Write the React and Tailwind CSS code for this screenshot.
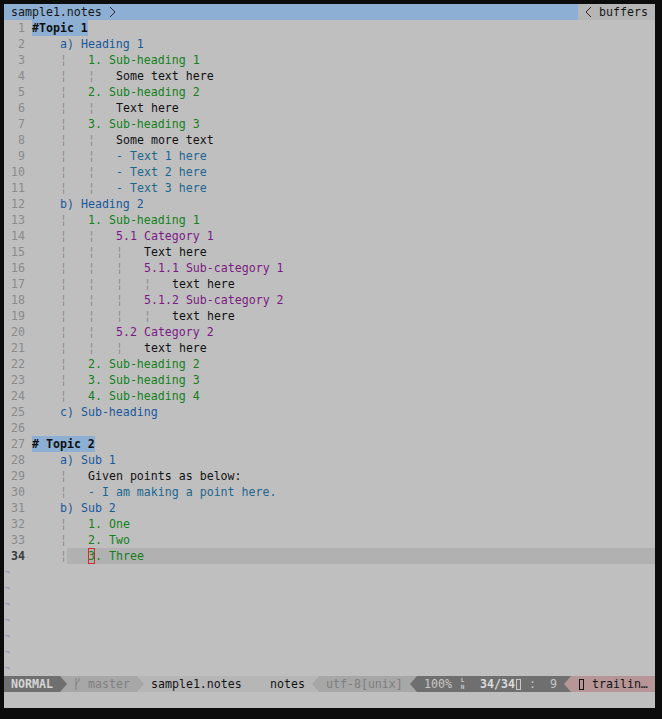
import React from "react";

const C = {
  head: "text-[#1a589c]",
  green: "text-[#13801a]",
  purple: "text-[#7a1a82]",
  dash: "text-[#1c668e]",
  plain: "text-[#111111]",
};

const lines = [
  { col: 0, g: [], t: "#Topic 1", top: true },
  { col: 4, g: [], t: "a) Heading 1", c: C.head },
  { col: 8, g: [4], t: "1. Sub-heading 1", c: C.green },
  { col: 12, g: [4, 8], t: "Some text here", c: C.plain },
  { col: 8, g: [4], t: "2. Sub-heading 2", c: C.green },
  { col: 12, g: [4, 8], t: "Text here", c: C.plain },
  { col: 8, g: [4], t: "3. Sub-heading 3", c: C.green },
  { col: 12, g: [4, 8], t: "Some more text", c: C.plain },
  { col: 12, g: [4, 8], t: "- Text 1 here", c: C.dash },
  { col: 12, g: [4, 8], t: "- Text 2 here", c: C.dash },
  { col: 12, g: [4, 8], t: "- Text 3 here", c: C.dash },
  { col: 4, g: [], t: "b) Heading 2", c: C.head },
  { col: 8, g: [4], t: "1. Sub-heading 1", c: C.green },
  { col: 12, g: [4, 8], t: "5.1 Category 1", c: C.purple },
  { col: 16, g: [4, 8, 12], t: "Text here", c: C.plain },
  { col: 16, g: [4, 8, 12], t: "5.1.1 Sub-category 1", c: C.purple },
  { col: 20, g: [4, 8, 12, 16], t: "text here", c: C.plain },
  { col: 16, g: [4, 8, 12], t: "5.1.2 Sub-category 2", c: C.purple },
  { col: 20, g: [4, 8, 12, 16], t: "text here", c: C.plain },
  { col: 12, g: [4, 8], t: "5.2 Category 2", c: C.purple },
  { col: 16, g: [4, 8, 12], t: "text here", c: C.plain },
  { col: 8, g: [4], t: "2. Sub-heading 2", c: C.green },
  { col: 8, g: [4], t: "3. Sub-heading 3", c: C.green },
  { col: 8, g: [4], t: "4. Sub-heading 4", c: C.green },
  { col: 4, g: [], t: "c) Sub-heading", c: C.head },
  { col: 0, g: [], t: "" },
  { col: 0, g: [], t: "# Topic 2", top: true },
  { col: 4, g: [], t: "a) Sub 1", c: C.head },
  { col: 8, g: [4], t: "Given points as below:", c: C.plain },
  { col: 8, g: [4], t: "- I am making a point here.", c: C.dash },
  { col: 4, g: [], t: "b) Sub 2", c: C.head },
  { col: 8, g: [4], t: "1. One", c: C.green },
  { col: 8, g: [4], t: "2. Two", c: C.green },
  { col: 8, g: [4], t: "3. Three", c: C.green, cursor: true },
];

function Row({ n, l }) {
  const cells = [];
  for (let i = 0; i < l.col; i++) {
    const isGuide = l.g.includes(i);
    cells.push(
      <span
        key={i}
        className={
          "inline-block w-[7px] shrink-0 text-center text-[#8d8d8d] " +
          (l.cursor && i >= 5 ? "bg-[#b1b1b1]" : "")
        }
      >
        {isGuide ? "\u00a6" : "\u00a0"}
      </span>
    );
  }
  return (
    <div className="flex h-[16px] w-[651px]">
      <div
        className={
          "w-[21px] shrink-0 text-right " +
          (l.cursor ? "font-bold text-[#3c3c3c]" : "text-[#8a8a8a]")
        }
      >
        {n}
      </div>
      <div className="w-[7px] shrink-0" />
      <div className="flex flex-1">
        {cells}
        {l.top ? (
          <span className="bg-[#8cafd3] font-bold text-[#0e0e0e]">{l.t}</span>
        ) : l.cursor ? (
          <div className="flex flex-1 bg-[#b1b1b1]">
            <span className="box-border inline-block h-[16px] w-[7px] border border-[#d22e2e] leading-[14px] text-[#13801a]">
              <span className="-ml-px">3</span>
            </span>
            <span className={l.c}>. Three</span>
          </div>
        ) : (
          <span className={l.c}>{l.t}</span>
        )}
      </div>
    </div>
  );
}

function Tri({ dir, bg, fill }) {
  return (
    <div className={"h-[16px] w-[7px] shrink-0 " + bg}>
      <svg width="7" height="16" viewBox="0 0 7 16" className="block">
        {dir === "r" ? (
          <polygon points="0,0 7,8 0,16" fill={fill} />
        ) : (
          <polygon points="7,0 0,8 7,16" fill={fill} />
        )}
      </svg>
    </div>
  );
}

function Tofu() {
  return (
    <span className="flex h-[16px] w-[7px] shrink-0 items-center justify-center">
      <span className="box-border block h-[11px] w-[5px] border border-current" />
    </span>
  );
}

export default function App() {
  const mid = "bg-[#b6b6b6]";
  const seg = "bg-[#a7a7a7]";
  const dark = "bg-[#6f6f6f]";
  const pink = "bg-[#b69696]";
  return (
    <div
      className="h-[719px] w-[662px] overflow-hidden bg-[#0c0c0c] pl-[4px] pt-[4px] text-[11.6px] leading-[16px]"
      style={{ fontFamily: "'DejaVu Sans Mono', monospace" }}
    >
      <div className="flex h-[704px] w-[651px] flex-col bg-[#bfbfbf] whitespace-pre">
        {/* tabline */}
        <div className="flex h-[16px] w-[651px]">
          <div className="flex w-[574px] bg-[#8cafd3] text-[#161616]">
            <span className="w-[7px]" />
            <span className="w-[91px]">sample1.notes</span>
            <span className="w-[7px]" />
            <svg width="7" height="16" viewBox="0 0 7 16" className="block">
              <polyline points="1,3 6,8 1,13" fill="none" stroke="#2a2a2a" strokeWidth="1" />
            </svg>
          </div>
          <div className="flex w-[77px] bg-[#b6b6b6] text-[#161616]">
            <span className="w-[7px]" />
            <svg width="7" height="16" viewBox="0 0 7 16" className="block">
              <polyline points="6,3 1,8 6,13" fill="none" stroke="#2a2a2a" strokeWidth="1" />
            </svg>
            <span className="w-[7px]" />
            <span>buffers</span>
          </div>
        </div>

        {/* text rows */}
        {lines.map((l, i) => (
          <Row key={i} n={i + 1} l={l} />
        ))}
        {Array.from({ length: 7 }).map((_, i) => (
          <div key={"t" + i} className="flex h-[16px] w-[7px] items-center justify-center text-[9px] text-[#8484ae]">
            ~
          </div>
        ))}

        {/* statusline */}
        <div className="flex h-[16px] w-[651px]">
          <div className={"w-[56px] shrink-0 pl-[7px] font-bold text-[#d6d6d6] " + dark}>NORMAL</div>
          <Tri dir="r" bg={seg} fill="#6f6f6f" />
          <div className={"flex w-[70px] shrink-0 text-[#808080] " + seg}>
            <span className="w-[7px]" />
            <svg width="7" height="16" viewBox="0 0 7 16" className="block">
              <path d="M2 2 V14 M2 9 C2 6 5 7 5 4 V2" fill="none" stroke="#808080" strokeWidth="1" />
            </svg>
            <span className="w-[7px]" />
            <span>master</span>
          </div>
          <Tri dir="r" bg={mid} fill="#a7a7a7" />
          <div className={"flex w-[168px] shrink-0 text-[#141414] " + mid}>
            <span className="w-[7px]" />
            <span className="w-[119px]">sample1.notes</span>
            <span>notes</span>
          </div>
          <Tri dir="l" bg={mid} fill="#a7a7a7" />
          <div className={"flex w-[91px] shrink-0 pl-[7px] text-[#7e7e7e] " + seg}>utf-8[unix]</div>
          <Tri dir="l" bg={seg} fill="#6f6f6f" />
          <div className={"flex w-[147px] shrink-0 text-[#c8c8c8] " + dark}>
            <span className="w-[7px]" />
            <span className="w-[28px]">100%</span>
            <span className="w-[7px]" />
            <span className="flex w-[7px] flex-col items-center text-[6px] leading-[7px] font-bold">
              <span>L</span>
              <span>N</span>
            </span>
            <span className="w-[14px]" />
            <span className="w-[35px] font-bold text-[#dadada]">34/34</span>
            <Tofu />
            <span className="w-[7px]" />
            <span className="w-[7px]">:</span>
            <span className="w-[14px]" />
            <span className="w-[7px]">9</span>
          </div>
          <Tri dir="l" bg={dark} fill="#b69696" />
          <div className={"flex w-[84px] shrink-0 text-[#141414] " + pink}>
            <span className="w-[7px]" />
            <Tofu />
            <span className="w-[7px]" />
            <span>trailin…</span>
          </div>
        </div>
        {/* command line */}
        <div className="h-[16px]" />
      </div>
    </div>
  );
}
